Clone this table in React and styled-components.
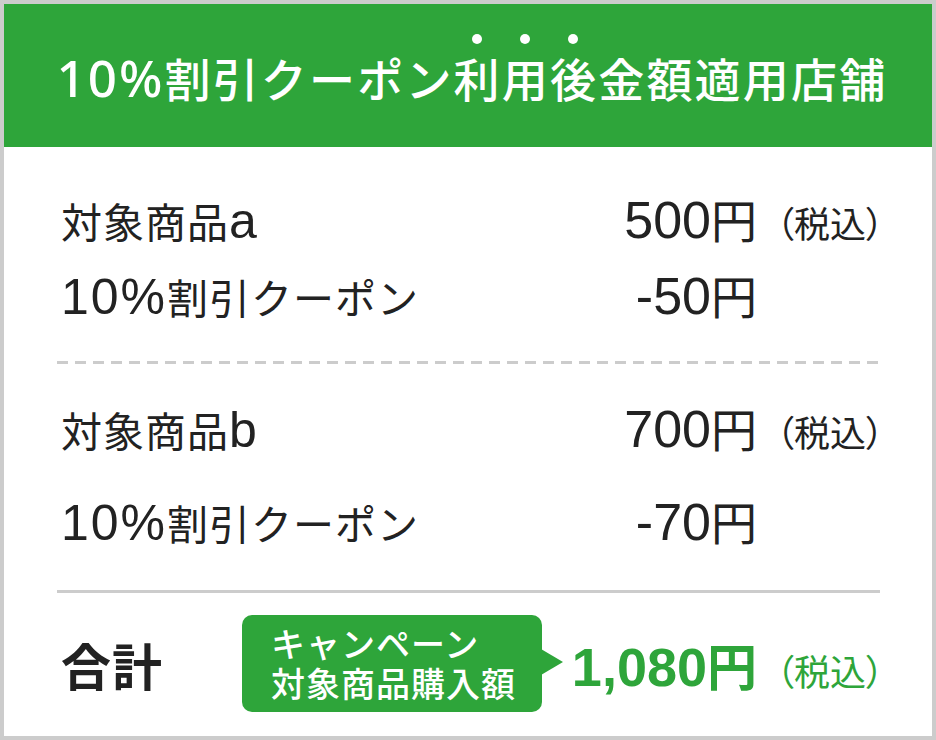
import styled, { createGlobalStyle } from "styled-components";

const GREEN = "#2ea53a";
const INK = "#222";

const GlobalStyle = createGlobalStyle`
  body {
    margin: 0;
    background: #fff;
    font-family: "Noto Sans CJK JP", "Noto Sans", sans-serif;
  }
`;

const Card = styled.div`
  width: 936px;
  height: 740px;
  box-sizing: border-box;
  border: 4px solid #cccccc;
  background: #fff;
  display: flex;
  flex-direction: column;
`;

const Header = styled.h1`
  margin: 0;
  height: 143px;
  flex: none;
  background: ${GREEN};
  color: #fff;
  display: flex;
  align-items: baseline;
  justify-content: center;
  font-size: 46px;
  font-weight: 500;
  letter-spacing: 2.2px;
  padding: 38px 0 0 8px;
  box-sizing: border-box;
`;

// latin part of a line, set in its own face and size
const Lat = styled.span`
  font-family: ${(p) => (p.$noto ? '"Noto Sans"' : '"Liberation Sans"')}, sans-serif;
  font-size: ${(p) => p.$size}px;
  letter-spacing: ${(p) => p.$ls ?? 0}px;
`;

// 傍点: the dot sits over the character
const Dot = styled.span`
  position: relative;
  &::before {
    content: "";
    position: absolute;
    left: 50%;
    top: -10px;
    width: 10px;
    height: 10px;
    margin-left: -6px;
    border-radius: 50%;
    background: #fff;
  }
`;

const Body = styled.div`
  flex: 1;
  display: flex;
  flex-direction: column;
  padding: 0 52px 0 53px;
`;

const Section = styled.div`
  display: flex;
  flex-direction: column;
  gap: ${(p) => p.$gap || 0}px;
  padding: ${(p) => p.$top}px 0 ${(p) => p.$bottom}px;
`;

const Row = styled.div`
  height: 76px;
  display: flex;
  align-items: baseline;
  color: ${INK};
  font-size: 41px;
  line-height: 76px;
`;

const Label = styled.div`
  flex: 1;
  padding-left: 4px;
  letter-spacing: 1px;
`;

const Price = styled.div`
  text-align: right;
  white-space: nowrap;
  color: ${(p) => (p.$accent ? GREEN : INK)};
  font-weight: ${(p) => (p.$accent ? 700 : 400)};
  font-size: ${(p) => (p.$accent ? 50 : 46)}px;
`;

const Tax = styled.div`
  width: 127px;
  margin-right: -4px;
  flex: none;
  text-align: right;
  font-size: 36px;
  font-feature-settings: "palt";
  color: ${(p) => (p.$accent ? GREEN : INK)};
`;

const Dashed = styled.div`
  height: 3px;
  background: repeating-linear-gradient(
    to right,
    #cccccc 0 11px,
    transparent 11px 18px
  );
`;

const Solid = styled.div`
  height: 3px;
  background: #cccccc;
`;

const Total = styled.div`
  flex: 1;
  display: flex;
  align-items: center;
  padding-bottom: 2px;
`;

const TotalLabel = styled.div`
  width: 181px;
  padding-left: 4px;
  font-size: 50px;
  font-weight: 700;
  color: ${INK};
  letter-spacing: 1px;
`;

const Badge = styled.div`
  position: relative;
  width: 300px;
  height: 97px;
  box-sizing: border-box;
  padding: 8px 0 0 29px;
  border-radius: 10px;
  background: ${GREEN};
  color: #fff;
  font-size: 34px;
  font-weight: 500;
  letter-spacing: 1px;
  &::after {
    content: "";
    position: absolute;
    right: -21px;
    top: 34px;
    border-style: solid;
    border-width: 13px 0 13px 22px;
    border-color: transparent transparent transparent ${GREEN};
  }
`;

const BadgeLine = styled.div`
  height: 40px;
  line-height: 40px;
`;

const TotalPrice = styled.div`
  flex: 1;
  display: flex;
  justify-content: flex-end;
  align-items: baseline;
`;

export default function App() {
  return (
    <>
      <GlobalStyle />
      <Card>
        <Header>
          <Lat $noto $size={51} $ls={2}>
            10%
          </Lat>
          割引クーポン<Dot>利</Dot>
          <Dot>用</Dot>
          <Dot>後</Dot>金額適用店舗
        </Header>
        <Body>
          <Section $top={33} $bottom={29}>
            <Row>
              <Label>
                対象商品<Lat $size={50}>a</Lat>
              </Label>
              <Price>
                <Lat $size={52}>500</Lat>円
              </Price>
              <Tax>（税込）</Tax>
            </Row>
            <Row>
              <Label>
                <Lat $size={50} $ls={2}>
                  10%
                </Lat>
                割引クーポン
              </Label>
              <Price>
                <Lat $size={52}>-50</Lat>円
              </Price>
              <Tax />
            </Row>
          </Section>
          <Dashed />
          <Section $top={25} $gap={17} $bottom={32}>
            <Row>
              <Label>
                対象商品<Lat $size={50}>b</Lat>
              </Label>
              <Price>
                <Lat $size={52}>700</Lat>円
              </Price>
              <Tax>（税込）</Tax>
            </Row>
            <Row>
              <Label>
                <Lat $size={50} $ls={2}>
                  10%
                </Lat>
                割引クーポン
              </Label>
              <Price>
                <Lat $size={52}>-70</Lat>円
              </Price>
              <Tax />
            </Row>
          </Section>
          <Solid />
          <Total>
            <TotalLabel>合計</TotalLabel>
            <Badge>
              <BadgeLine>キャンペーン</BadgeLine>
              <BadgeLine>対象商品購入額</BadgeLine>
            </Badge>
            <TotalPrice>
              <Price $accent>
                <Lat $size={54}>1,080</Lat>円
              </Price>
              <Tax $accent>（税込）</Tax>
            </TotalPrice>
          </Total>
        </Body>
      </Card>
    </>
  );
}
